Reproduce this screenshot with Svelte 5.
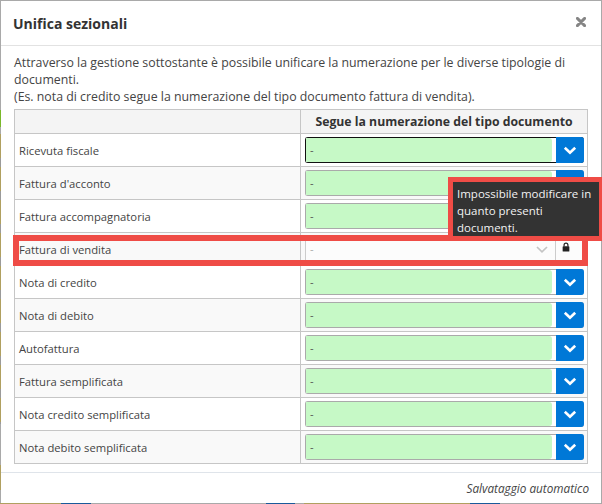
<script lang="ts">
	const rows = [
		'Ricevuta fiscale',
		"Fattura d'acconto",
		'Fattura accompagnatoria',
		'Fattura di vendita',
		'Nota di credito',
		'Nota di debito',
		'Autofattura',
		'Fattura semplificata',
		'Nota credito semplificata',
		'Nota debito semplificata'
	];
	const lockedRow = 'Fattura di vendita';
</script>

<div class="backdrop">
	<div class="modal">
		<header class="modal-header">
			<h4>Unifica sezionali</h4>
			<svg class="close" viewBox="0 0 10 10" width="10" height="10" aria-hidden="true">
				<path d="M1.4 1.4 L8.6 8.6 M8.6 1.4 L1.4 8.6" stroke="#858585" stroke-width="2.9" stroke-linecap="round" />
			</svg>
		</header>

		<div class="modal-body">
			<p class="intro">
				Attraverso la gestione sottostante è possibile unificare la numerazione per le diverse tipologie di documenti.<br />
				(Es. nota di credito segue la numerazione del tipo documento fattura di vendita).
			</p>
			<table>
				<thead>
					<tr>
						<th></th>
						<th>Segue la numerazione del tipo documento</th>
					</tr>
				</thead>
				<tbody>
					{#each rows as row, i}
						<tr>
							<td class="label">{row}</td>
							<td class="field">
								{#if row === lockedRow}
									<div class="select locked">
										<span class="value">-</span>
										<svg class="caret" viewBox="0 0 12 7" width="12" height="7" aria-hidden="true">
											<path d="M1 1 L6 5.8 L11 1" fill="none" stroke="#c4c4c4" stroke-width="1.7" />
										</svg>
										<span class="lock">
											<svg viewBox="0 0 10 12" width="8" height="10" aria-hidden="true">
												<path d="M2.6 5.5 V3.6 a2.4 2.4 0 0 1 4.8 0 V5.5" fill="none" stroke="#222" stroke-width="1.5" />
												<rect x="0.8" y="5.2" width="8.4" height="6.5" rx="0.8" fill="#222" />
											</svg>
										</span>
									</div>
								{:else}
									<div class="select" class:focused={i === 0}>
										<span class="value">-</span>
										<span class="drop">
											<svg viewBox="0 0 14 9" width="14" height="9" aria-hidden="true">
												<path d="M1.8 1.8 L7 6.8 L12.2 1.8" fill="none" stroke="#fff" stroke-width="2.6" />
											</svg>
										</span>
									</div>
								{/if}
							</td>
						</tr>
					{/each}
				</tbody>
			</table>
		</div>

		<footer class="modal-footer">Salvataggio automatico</footer>
	</div>

	<div class="highlight"></div>
	<div class="tooltip">Impossibile modificare in quanto presenti documenti.</div>
</div>

<style>
	:global(body) {
		margin: 0;
		background: #a9a9a9;
	}
	.backdrop {
		position: relative;
		width: 602px;
		height: 504px;
		padding: 1px 1px 0;
		box-sizing: border-box;
		overflow: hidden;
		font-family: 'Open Sans', 'Noto Sans', sans-serif;
		color: #333;
		/* page behind the modal, visible only as a thin edge */
		background:
			linear-gradient(#7ab82a, #7ab82a) 0 110px / 1px 17px no-repeat,
			repeating-linear-gradient(#b0a060 0 24px, #9a9a9a 24px 33px) 0 134px / 1px 290px no-repeat,
			linear-gradient(#b0a060, #b0a060) 0 465px / 1px 25px no-repeat,
			linear-gradient(
					90deg,
					#b0a060 0 61px,
					#1a5a9a 61px 91px,
					#a9a9a9 91px 266px,
					#1a5a9a 266px 295px,
					#a9a9a9 295px 304px,
					#b0a060 304px 470px,
					#1a5a9a 470px 500px,
					#a9a9a9 500px
				)
				0 503px / 100% 1px no-repeat,
			#a9a9a9;
	}
	.modal {
		height: 502px;
		background: #fff;
		display: flex;
		flex-direction: column;
		box-sizing: border-box;
	}
	.modal-header {
		height: 45px;
		flex: none;
		box-sizing: border-box;
		border-bottom: 1px solid #e2e2e2;
		display: flex;
		align-items: center;
		justify-content: space-between;
		padding: 0 15px 0 12px;
	}
	h4 {
		margin: 0;
		font-size: 14px;
		font-weight: 700;
		color: #333;
	}
	.close {
		margin-bottom: 3px;
	}
	.modal-body {
		flex: 1;
		padding: 8px 13px 0;
	}
	.intro {
		margin: 0 0 4px;
		font-size: 12.33px;
		line-height: 17px;
		color: #444;
	}
	table {
		border-collapse: collapse;
		width: 574px;
		table-layout: fixed;
		font-size: 11.25px;
	}
	th,
	td {
		border: 1px solid #c6c6c6;
		padding: 0;
	}
	th {
		height: 23px;
		background: #f4f4f4;
		font-size: 12.25px;
		font-weight: 700;
		text-align: center;
	}
	th:first-child,
	td.label {
		width: 285px;
	}
	tbody tr {
		height: 33px;
	}
	tbody tr:nth-child(even) td {
		background: #f9f9f9;
	}
	td.label {
		padding-left: 4px;
		color: #444;
	}
	.field {
		padding: 3px 3px 3px 4px;
	}
	.select {
		height: 26px;
		display: flex;
		align-items: stretch;
		box-sizing: border-box;
		background: #fff;
		border: 1px solid #aaa;
		border-right: 0;
		border-radius: 3px;
	}
	.select.focused {
		border-color: #111;
	}
	.value {
		flex: 1;
		padding-left: 4px;
		margin-right: 4px;
		line-height: 24px;
		color: #555;
		background: #c6f9c6;
		border-radius: 0 3px 3px 0;
	}
	.drop {
		width: 28px;
		margin: -1px 0;
		flex: none;
		background: #0078d7;
		border-radius: 0 3px 3px 0;
		display: flex;
		align-items: center;
		justify-content: center;
	}
	.select.locked {
		background: #fcfcfc;
		border: 0;
		border-left: 1px solid #ccc;
		border-radius: 0;
		align-items: center;
	}
	.select.locked .value {
		color: #aaa;
		background: none;
	}
	.caret {
		margin-right: 7px;
	}
	.lock {
		width: 29px;
		height: 24px;
		padding-right: 9px;
		border-left: 1px solid #ccc;
		box-sizing: border-box;
		display: flex;
		align-items: center;
		justify-content: center;
	}
	.lock svg {
		margin-top: -5px;
	}
	.modal-footer {
		flex: none;
		height: 31px;
		box-sizing: border-box;
		border-top: 1px solid #dfe4ea;
		font-size: 11.75px;
		font-style: italic;
		text-align: right;
		padding: 7px 12px 0 0;
		color: #444;
	}
	.highlight {
		position: absolute;
		left: 13px;
		top: 235px;
		width: 575px;
		height: 31px;
		border: 6px solid #ef4c46;
		box-sizing: border-box;
	}
	.tooltip {
		position: absolute;
		left: 448px;
		top: 177px;
		width: 156px;
		height: 64px;
		box-sizing: border-box;
		background: #333;
		border: 5px solid #ef4c46;
		color: #f2f2f2;
		font-size: 11.5px;
		line-height: 17px;
		padding: 3px 4px;
	}
</style>
